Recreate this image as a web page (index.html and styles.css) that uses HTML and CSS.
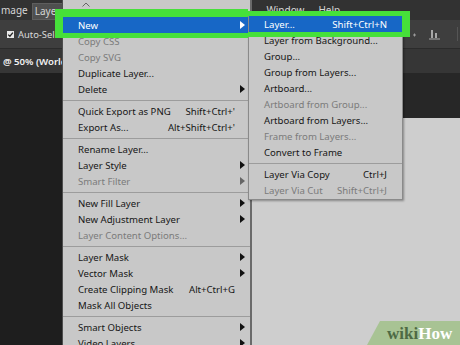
FILE: index.html
```html
<!DOCTYPE html>
<html lang="en">
<head>
    <meta charset="UTF-8">
    <title>Layer menu</title>
    <link rel="stylesheet" href="styles.css">
</head>
<body>

    <div class="app">
        <!-- menu bar -->
        <div class="menubar">
            <span class="mb-item first">mage</span>
            <span class="mb-item active">Layer</span>
            <span class="mb-item win">Window</span>
            <span class="mb-item">Help</span>
        </div>

        <!-- options bar -->
        <div class="optbar">
            <span class="check">
                <svg width="7" height="7" viewBox="0 0 7 7"><path d="M1.2 3.6 L2.9 5.2 L5.9 1.6" fill="none" stroke="#222" stroke-width="1.3"/></svg>
            </span>
            <span>Auto-Select</span>
            <span class="opt-icons">
                <svg width="56" height="14" viewBox="0 0 56 14">
                    <path d="M1 8 H6 M9 8 H12 M10.5 6.5 V9.5" stroke="#9a9a9a" stroke-width="1" fill="none"/>
                    <rect x="27" y="3" width="2" height="8" fill="#a8a8a8"/>
                    <rect x="31" y="6" width="2" height="5" fill="#a8a8a8"/>
                    <path d="M25 12 H36" stroke="#a8a8a8" stroke-width="1"/>
                    <path d="M53.5 0 V14" stroke="#555" stroke-width="1"/>
                </svg>
            </span>
        </div>

        <!-- document tab -->
        <div class="tabbar">
            <span class="doc-tab">@ 50% (World</span>
        </div>

        <!-- workspace -->
        <div class="workspace">
            <div class="ws-left"></div>
            <div class="ws-top"></div>
            <div class="canvas"></div>
        </div>
    </div>

    <!-- Layer menu -->
    <div class="menu">
        <svg class="scroll-up" width="8" height="5" viewBox="0 0 8 5"><path d="M0.5 4.5 L4 1 L7.5 4.5" fill="none" stroke="#666" stroke-width="1"/></svg>
        <div class="row on"><span>New</span><span></span><i class="arrow"></i></div>
        <div class="row off"><span>Copy CSS</span></div>
        <div class="row off"><span>Copy SVG</span></div>
        <div class="row"><span>Duplicate Layer...</span></div>
        <div class="row"><span>Delete</span><span></span><i class="arrow"></i></div>
        <div class="sep"></div>
        <div class="row"><span>Quick Export as PNG</span><span class="key">Shift+Ctrl+'</span></div>
        <div class="row"><span>Export As...</span><span class="key">Alt+Shift+Ctrl+'</span></div>
        <div class="sep"></div>
        <div class="row"><span>Rename Layer...</span></div>
        <div class="row"><span>Layer Style</span><span></span><i class="arrow"></i></div>
        <div class="row off"><span>Smart Filter</span><span></span><i class="arrow"></i></div>
        <div class="sep"></div>
        <div class="row"><span>New Fill Layer</span><span></span><i class="arrow"></i></div>
        <div class="row"><span>New Adjustment Layer</span><span></span><i class="arrow"></i></div>
        <div class="row off"><span>Layer Content Options...</span></div>
        <div class="sep"></div>
        <div class="row"><span>Layer Mask</span><span></span><i class="arrow"></i></div>
        <div class="row"><span>Vector Mask</span><span></span><i class="arrow"></i></div>
        <div class="row"><span>Create Clipping Mask</span><span class="key">Alt+Ctrl+G</span></div>
        <div class="row"><span>Mask All Objects</span></div>
        <div class="sep"></div>
        <div class="row"><span>Smart Objects</span><span></span><i class="arrow"></i></div>
        <div class="row"><span>Video Layers</span><span></span><i class="arrow"></i></div>
    </div>

    <!-- New submenu -->
    <div class="submenu">
        <div class="row on"><span>Layer...</span><span class="key">Shift+Ctrl+N</span></div>
        <div class="row"><span>Layer from Background...</span></div>
        <div class="row"><span>Group...</span></div>
        <div class="row"><span>Group from Layers...</span></div>
        <div class="row"><span>Artboard...</span></div>
        <div class="row off"><span>Artboard from Group...</span></div>
        <div class="row"><span>Artboard from Layers...</span></div>
        <div class="row off"><span>Frame from Layers...</span></div>
        <div class="row"><span>Convert to Frame</span></div>
        <div class="sep"></div>
        <div class="row"><span>Layer Via Copy</span><span class="key">Ctrl+J</span></div>
        <div class="row off"><span>Layer Via Cut</span><span class="key">Shift+Ctrl+J</span></div>
    </div>

    <!-- green annotation -->
    <div class="mark mark-a"></div>
    <div class="mark mark-b"></div>

    <div class="wm"><span class="wm-wiki">wiki</span><span class="wm-how">How</span></div>

</body>
</html>
```

FILE: styles.css
```css
body{
    margin: 0;
    width: 460px;
    height: 345px;
    overflow: hidden;
    position: relative;
    background-color: #1e1e1e;
    font-family: "Noto Sans", "Liberation Sans", sans-serif;
}

.app{
    display: flex;
    flex-direction: column;
    height: 345px;
}

/* menu bar */
.menubar{
    height: 20px;
    background-color: #323232;
    display: flex;
    align-items: center;
    font-size: 10px;
    color: #d6d6d6;
}

.mb-item{
    padding: 0 3px;
    line-height: 17px;
}

.mb-item.first{
    padding-left: 1px;
    margin-right: 1px;
}

.mb-item.active{
    background-color: #4f4f4f;
    box-shadow: inset 0 0 0 1px #5e5e5e;
    margin-top: 2px;
}

.mb-item.win{
    margin-left: 200px;
    margin-right: 8px;
}

/* options bar */
.optbar{
    height: 28px;
    background-color: #3e3e3e;
    border-bottom: 1px solid #2b2b2b;
    display: flex;
    align-items: center;
    padding-left: 7px;
    font-size: 9.4px;
    color: #dadada;
}

.check{
    width: 7px;
    height: 7px;
    background-color: #e8e8e8;
    display: flex;
    margin-right: 4px;
    margin-top: 1px;
}

.opt-icons{
    margin-left: auto;
    display: flex;
}

/* document tab */
.tabbar{
    height: 24px;
    background-color: #363636;
    display: flex;
    align-items: center;
    padding-left: 3px;
    font-size: 9.6px;
    font-weight: 600;
    color: #f2f2f2;
    white-space: nowrap;
}

/* workspace */
.workspace{
    flex: 1;
    display: grid;
    grid-template-columns: 252px 1fr;
    grid-template-rows: 45px 1fr;
}

.ws-left{
    grid-column: 1;
    grid-row: 1 / 3;
    background-color: #1e1e1e;
}

.ws-top{
    grid-column: 2;
    grid-row: 1;
    background-color: #272727;
}

.canvas{
    grid-column: 2;
    grid-row: 2;
    background-color: #cecece;
}

/* menus */
.menu{
    position: absolute;
    left: 62px;
    top: 0;
    width: 190px;
    bottom: 0;
    overflow: hidden;
    box-sizing: border-box;
    padding-top: 17px;
    background-color: #c8c8c8;
    border-left: 1px solid #4d4d4d;
    border-right: 2px solid #6a6a6a;
    font-size: 9.6px;
    color: #161616;
}

.scroll-up{
    position: absolute;
    left: 19px;
    top: 2px;
}

.row{
    height: 16px;
    display: grid;
    grid-template-columns: 1fr auto 15px;
    align-items: center;
    padding-left: 15px;
    white-space: nowrap;
}

.row.on{
    background-color: #1767c6;
    color: #ffffff;
}

.row.off{
    color: #7b7b7b;
}

.arrow{
    width: 0;
    height: 0;
    border-left: 5px solid #111111;
    border-top: 4px solid transparent;
    border-bottom: 4px solid transparent;
    margin-left: 5px;
}

.on .arrow{
    border-left-color: #ffffff;
}

.off .arrow{
    border-left-color: #666666;
}

.sep{
    height: 1px;
    background-color: #9c9c9c;
    margin: 3px 0 2px;
}

.submenu{
    position: absolute;
    left: 248px;
    top: 12px;
    width: 155px;
    box-sizing: border-box;
    padding: 3px 0 1px;
    background-color: #c8c8c8;
    border: 1px solid #8a8a8a;
    box-shadow: 1px 1px 2px rgba(0,0,0,.35);
    font-size: 9.6px;
    color: #161616;
}

.submenu .row{
    grid-template-columns: 1fr auto;
    padding: 0 15px;
}

/* green annotation box */
.mark{
    position: absolute;
    box-sizing: border-box;
    border: 0 solid #46e03a;
}

.mark-a{
    left: 55px;
    top: 9px;
    width: 193px;
    height: 29px;
    border-width: 8px 0 5px 8px;
}

.mark-b{
    left: 248px;
    top: 11px;
    width: 162px;
    height: 26px;
    border-width: 5px 8px 5px 0;
}

/* watermark */
.wm{
    position: absolute;
    right: 0;
    bottom: 0;
    width: 93px;
    height: 24px;
    box-sizing: border-box;
    padding-left: 20px;
    background-color: #a8c394;
    clip-path: polygon(13px 0, 100% 0, 100% 100%, 0 100%);
    font-family: "Liberation Serif", serif;
    font-weight: 700;
    font-size: 17px;
    line-height: 26px;
}

.wm-wiki{
    color: #4e6a44;
}

.wm-how{
    color: #ffffff;
}
```
